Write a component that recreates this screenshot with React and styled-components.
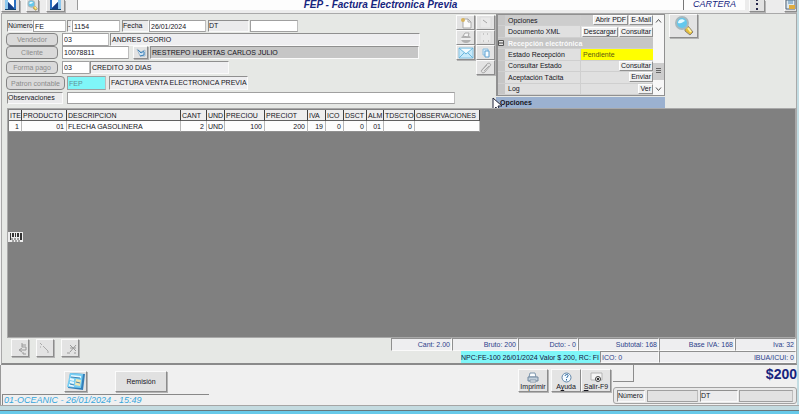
import React from 'react'
import styled, { createGlobalStyle, css } from 'styled-components'

const GlobalStyle = createGlobalStyle`
    * {
        box-sizing: border-box;
    }
    body {
        margin: 0;
        background: #f0f0f0;
        color: #14141c;
        font-family: "Liberation Sans", Arial, sans-serif;
        font-size: 7px;
        line-height: 9px;
        overflow: hidden;
    }
    button, input {
        font: inherit;
        color: inherit;
        margin: 0;
        padding: 0;
        border-radius: 0;
    }
    svg {
        flex: none;
    }
`
const raised = css`
    border: 1px solid;
    border-color: #fbfbfb #8c8c8c #8c8c8c #fbfbfb;
    box-shadow: 1px 1px 0 #b4b4b4;
`
const sunken = css`
    border: 1px solid;
    border-color: #8f8f8f #fafafa #fafafa #8f8f8f;
`
const Window = styled.div`
    border-right: 2px solid #c3dde3;
    background: #f0f0f0;
`
const TopBar = styled.header`
    display: flex;
    align-items: flex-start;
    height: 13px;
    overflow: hidden;
    padding-left: 1px;
    background: #ececec;
`
const TopButton = styled.button`
    ${raised}
    display: flex;
    align-items: flex-end;
    justify-content: center;
    flex: none;
    width: ${props => props.$w}px;
    height: 12px;
    margin-right: ${props => props.$gap || 0}px;
    border-top: none;
    background: #e2e2e2;
`
const Title = styled.h1`
    flex: 1;
    height: 10px;
    margin: 0;
    background: #fdfdfd;
    border-left: 1px solid #999;
    color: #16247e;
    font-size: 10px;
    line-height: 10px;
    font-weight: 700;
    font-style: italic;
    text-align: center;
`
const Module = styled.div`
    flex: none;
    width: 62px;
    height: 10px;
    margin-right: 4px;
    border-left: 1px solid #777;
    background: #fdfdfd;
    color: #16247e;
    font-size: 9px;
    line-height: 9px;
    font-style: italic;
    text-align: center;
`
const Panel = styled.main`
    border: 1px solid #a9a9a9;
    border-bottom: 2px solid #8a8a8a;
    background: #e6e8e5;
    padding-left: 4px;
    margin-left: 1px;
`
const Upper = styled.div`
    display: flex;
    align-items: flex-start;
    height: 94px;
`
const Form = styled.form`
    flex: none;
    width: 449px;
    padding-top: 6px;
`
const Row = styled.div`
    display: flex;
    align-items: stretch;
    height: ${props => props.$h || 13}px;
    margin-bottom: ${props => props.$gap || 0}px;
    padding-left: ${props => props.$indent || 0}px;
`
const Field = styled.input`
    width: ${props => props.$w ? `${props.$w}px` : 'auto'};
    flex: ${props => props.$w ? 'none' : '1'};
    min-width: 0;
    margin-right: ${props => props.$gap || 0}px;
    padding-left: 1px;
    border: 1px solid #a0a0a0;
    border-color: #a0a0a0 #bdbdbd #a0a0a0 #a0a0a0;
    background: ${props => props.$bg || '#fff'};
    color: ${props => props.$color || 'inherit'};
    outline: none;
`
const Caption = styled.label`
    ${sunken}
    flex: none;
    width: ${props => props.$w}px;
    margin-right: ${props => props.$gap || 0}px;
    background: #ebebec;
    line-height: 10px;
    white-space: nowrap;
`
const Display = styled.output`
    ${sunken}
    flex: none;
    width: ${props => props.$w}px;
    padding-left: 1px;
    background: ${props => props.$bg || '#eeeef0'};
    line-height: 11px;
    white-space: nowrap;
`
const Pill = styled.button`
    flex: none;
    width: ${props => props.$w}px;
    margin-right: ${props => props.$gap}px;
    border: 1px solid #858585;
    border-radius: 4px;
    background: #dadada;
    color: #8a8a8a;
    line-height: 9px;
    white-space: nowrap;
`
const IconButton = styled.button`
    ${raised}
    display: flex;
    align-items: center;
    justify-content: center;
    flex: none;
    width: ${props => props.$w}px;
    height: ${props => props.$h}px;
    margin-right: ${props => props.$gap || 0}px;
    background: #e3e3e3;
`
const Tools = styled.div`
    display: grid;
    grid-template-columns: 19px 19px;
    grid-auto-rows: 15px;
    gap: 0 1px;
    width: 41px;
    flex: none;
    padding: 1px 0 0 1px;
`
const Side = styled.section`
    position: relative;
    flex: none;
    width: 169px;
    margin-right: 4px;
`
const Properties = styled.div`
    display: grid;
    grid-template-columns: 1fr 11px;
    height: 82px;
    border: 1px solid #909090;
    border-left-width: 2px;
    background: #c9c9c9;
`
const PropertyList = styled.div`
    display: grid;
    grid-template-rows: repeat(7, 1fr);
    min-width: 0;
`
const Property = styled.div`
    display: grid;
    grid-template-columns: 7px 75px 1fr;
    align-items: center;
    min-height: 0;
    border-bottom: 1px solid #cfcfcf;
    background: ${props => props.$bg || '#e0e0e0'};
    color: ${props => props.$group ? '#fafafa' : '#14141c'};
    font-weight: ${props => props.$group ? '700' : '400'};
    white-space: nowrap;
`
const Gutter = styled.div`
    display: flex;
    align-items: center;
    align-self: stretch;
    background: #c6c6c6;
`
const PropertyName = styled.div`
    padding-left: 3px;
`
const Value = styled.div`
    display: flex;
    justify-content: ${props => props.$mark ? 'flex-start' : 'flex-end'};
    align-items: center;
    align-self: stretch;
    gap: 1px;
    padding-left: ${props => props.$mark ? '2px' : '0'};
    border-left: 1px solid #cfcfcf;
    background: ${props => props.$mark ? '#ffff00' : 'transparent'};
    color: ${props => props.$mark ? '#5c5a10' : 'inherit'};
`
const MiniButton = styled.button`
    height: 10px;
    padding: 0 1px;
    border: 1px solid;
    border-color: #fff #909090 #909090 #fff;
    background: #f0f0f0;
    line-height: 8px;
`
const ScrollBar = styled.div`
    display: flex;
    flex-direction: column;
    align-items: center;
    justify-content: space-between;
    padding: 4px 0;
    background: #f7f7f7;
`
const Thumb = styled.div`
    display: flex;
    align-items: center;
    justify-content: center;
    width: 100%;
    height: 17px;
    margin-top: 32px;
    background: #cdcdcd;
`
const SideTitle = styled.h2`
    height: 11px;
    margin: 1px 0 0;
    padding-left: 4px;
    background: #9bb1d0;
    font-size: 7px;
    line-height: 12px;
    font-weight: 700;
`
const Pointer = styled.svg`
    position: absolute;
    left: -4px;
    top: 83px;
`
const Sheet = styled.section`
    position: relative;
    height: 230px;
    margin-left: 1px;
    border: 1px solid #fafafa;
    outline: 1px solid #a9a9a9;
    outline-offset: -1px;
    background: #808080;
    padding: 1px 0 0 1px;
`
const Table = styled.table`
    width: 471px;
    table-layout: fixed;
    border-collapse: separate;
    border-spacing: 0;
`
const Head = styled.th`
    height: 11px;
    padding: 0 1px;
    border-right: 1px solid #404040;
    border-bottom: 1px solid #606060;
    background: #eeeeee;
    font-weight: 400;
    line-height: 9px;
    text-align: left;
    white-space: nowrap;
`
const Cell = styled.td`
    height: 11px;
    padding: 0 ${props => props.$left ? '1px' : '2px'};
    border-right: 1px solid #b8b8b8;
    border-bottom: 1px solid #909090;
    background: #fdfdfd;
    line-height: 9px;
    text-align: ${props => props.$left ? 'left' : 'right'};
    white-space: nowrap;
`
const Barcode = styled.svg`
    position: absolute;
    left: 0;
    top: 123px;
`
const Lower = styled.div`
    display: flex;
    justify-content: space-between;
    height: 25px;
`
const SmallTools = styled.div`
    display: flex;
    gap: 7px;
    padding: 1px 0 0 5px;
`
const Totals = styled.div`
    width: 405px;
    color: #2b3f8b;
`
const TotalRow = styled.div`
    display: flex;
    justify-content: flex-end;
    height: ${props => props.$h}px;
`
const Total = styled.div`
    ${sunken}
    flex: none;
    width: ${props => props.$w}px;
    padding: 0 1px;
    background: #eeeef0;
    line-height: 11px;
    text-align: ${props => props.$left ? 'left' : 'right'};
    white-space: nowrap;
`
const Notice = styled(Total)`
    padding: 0;
    border: none;
    background: #7ff6f8;
    color: #15153c;
    line-height: 13px;
`
const Bottom = styled.footer`
    display: flex;
    justify-content: space-between;
    height: 40px;
    border-left: 1px solid #999;
    background: #f0f0f0;
`
const BottomLeft = styled.div`
    width: 208px;
    padding-top: 6px;
`
const Actions = styled.div`
    display: flex;
    align-items: stretch;
    gap: 28px;
    height: 21px;
    padding-left: 63px;
`
const TextButton = styled.button`
    ${raised}
    width: 52px;
    background: #e1e1e1;
`
const Status = styled.div`
    height: 11px;
    margin: 2px 0 0 1px;
    padding-left: 1px;
    border-top: 1px solid #888;
    border-left: 1px solid #888;
    color: #36a6dd;
    font-size: 9px;
    line-height: 11px;
    font-style: italic;
    white-space: nowrap;
`
const BottomRight = styled.div`
    display: flex;
`
const Commands = styled.div`
    display: flex;
    padding: 4px 2px 0 0;
`
const Command = styled.button`
    ${raised}
    display: flex;
    flex-direction: column;
    align-items: center;
    justify-content: space-between;
    width: 30px;
    height: 23px;
    margin-right: ${props => props.$gap || 0}px;
    padding-top: 2px;
    background: #e4e4e4;
    line-height: 8px;
    white-space: nowrap;
`
const Summary = styled.div`
    display: flex;
    flex-direction: column;
    justify-content: space-between;
    width: 184px;
    padding-bottom: 1px;
`
const SummaryTop = styled.div`
    display: flex;
    justify-content: space-between;
`
const Blank = styled.div`
    width: 21px;
    height: 17px;
    border-right: 1px solid #8c8c8c;
    border-bottom: 1px solid #8c8c8c;
`
const Amount = styled.strong`
    color: #16247e;
    font-size: 14px;
    line-height: 18px;
`
const Reference = styled.div`
    display: flex;
    align-items: center;
    height: 17px;
    padding: 2px 3px;
    border: 1px solid #a2a2a2;
    border-radius: 3px;
    background: #e9e9e9;

    & > * {
        height: 12px;
    }
`
const TaskEdge = styled.div`
    height: 6px;
    margin-right: -2px;
    border-top: 1px solid #a5a5a5;
    border-bottom: 1px solid #66777c;
    background: #c4dbe0;
`
const TaskBar = styled.nav`
    height: 4px;
    margin-right: -2px;
    overflow: hidden;
    background: #67c9e9;
`

const Arrow = ({ flip }) => (
    <svg width="11" height="11" viewBox="0 0 11 11" transform={flip ? 'scale(-1 1)' : undefined}>
        <path d="M0 0h11v9H0z" fill="#2a6fc0" />
        <path d="M0 0h3v9H0z" fill="#8cc7ee" />
        <path d="M9 0v8L3 2V0z" fill="#fff" />
        <path d="M3 2l6 6v1H3z" fill="#143f86" />
        <path d="M0 9h11v1H0z" fill="#174670" />
    </svg>
)
const Lens = ({ size }) => (
    <svg width={size} height={size} viewBox="0 0 20 20">
        <path d="M11 12l3-2 5 6-3 3-5-4z" fill="#e4bd3a" stroke="#8c8376" />
        <path d="M14 12l3 4" stroke="#fff3a3" strokeWidth="2" />
        <circle cx="8" cy="7" r="6" fill="#63c8ed" stroke="#a6b8be" strokeWidth="2" />
        <path d="M4 7c0-4 5-5 7-2-3 1-3 3-7 2z" fill="#e5faff" />
    </svg>
)
const GreyArt = ({ d }) => (
    <svg width="13" height="13" viewBox="0 0 13 13" fill="none" stroke="#a5a5a5">
        <path d="M1 1h11v11H1z" stroke="#dcdcdc" fill="#e9e9e9" />
        <path d={d} />
    </svg>
)

const columns = [
    ['ITE', 13, '1'],
    ['PRODUCTO', 45, '01'],
    ['DESCRIPCION', 114, 'FLECHA GASOLINERA', true],
    ['CANT', 26, '2'],
    ['UND', 18, 'UND', true],
    ['PRECIOU', 40, '100'],
    ['PRECIOT', 43, '200'],
    ['IVA', 18, '19'],
    ['ICO', 18, '0'],
    ['DSCT', 23, '0'],
    ['ALM', 17, '01'],
    ['TDSCTO', 31, '0'],
    ['OBSERVACIONES', 65, ''],
]

const properties = [
    { name: 'Opciones', bg: '#cdcdcd', actions: ['Abrir PDF', 'E-Mail'] },
    { name: 'Documento XML', actions: ['Descargar', 'Consultar'] },
    { name: 'Recepción electrónica', bg: '#c6c6c6', group: true },
    { name: 'Estado Recepción', mark: 'Pendiente' },
    { name: 'Consultar Estado', actions: ['Consultar'] },
    { name: 'Aceptación Tácita', actions: ['Enviar'] },
    { name: 'Log', actions: ['Ver'] },
]

const InvoiceForm = () => (
    <Form>
        <Row $h={12} $gap={1} $indent={1}>
            <Caption htmlFor="numero" $w={26}>Número</Caption>
            <Field id="numero" $w={33} $gap={1} defaultValue="FE" />
            <Caption htmlFor="consecutivo" $w={5}>-</Caption>
            <Field id="consecutivo" $w={48} $gap={2} defaultValue="1154" />
            <Caption htmlFor="fecha" $w={27}>Fecha</Caption>
            <Field id="fecha" $w={57} $gap={2} defaultValue="26/01/2024" />
            <Caption htmlFor="dt" $w={41} $gap={1}>DT</Caption>
            <Field id="dt" $w={48} />
        </Row>
        <Row>
            <Pill type="button" $w={52} $gap={4}>Vendedor</Pill>
            <Field aria-label="Vendedor" $w={47} $gap={1} defaultValue="03" />
            <Display $w={310}>ANDRES OSORIO</Display>
        </Row>
        <Row $gap={2}>
            <Pill type="button" $w={52} $gap={4}>Cliente</Pill>
            <Field aria-label="Cliente" $w={67} $gap={4} defaultValue="10078811" />
            <IconButton type="button" aria-label="Buscar cliente" $w={15} $h={13} $gap={2}>
                <svg width="10" height="10" viewBox="0 0 10 10">
                    <path d="M1 1l4 3 4-2v6H4z" fill="#d5e6f3" stroke="#a3bacb" />
                    <path d="M2 2l3 3 3-2M4 8l4-1V4" fill="none" stroke="#3a80b9" />
                </svg>
            </IconButton>
            <Display $w={269} $bg="#c6c6c6">RESTREPO HUERTAS CARLOS JULIO</Display>
        </Row>
        <Row $gap={2}>
            <Pill type="button" $w={52} $gap={4}>Forma pago</Pill>
            <Field aria-label="Forma pago" $w={28} defaultValue="03" />
            <Display $w={139}>CREDITO 30 DIAS</Display>
        </Row>
        <Row $h={14} $gap={2}>
            <Pill type="button" $w={59} $gap={2}>Patron contable</Pill>
            <Field aria-label="Patron contable" $w={39} $gap={3} $bg="#7ff6f8" $color="#628f95" defaultValue="FEP" />
            <Display $w={139}>FACTURA VENTA ELECTRONICA PREVIA</Display>
        </Row>
        <Row $h={12} $indent={1}>
            <Caption htmlFor="observaciones" $w={56} $gap={4}>Observaciones</Caption>
            <Field id="observaciones" />
        </Row>
    </Form>
)

const DocumentTools = () => (
    <Tools>
        <IconButton aria-label="Nuevo" $w={19} $h={15}>
            <svg width="12" height="12" viewBox="0 0 12 12">
                <path d="M3 2h5l3 3v6H3z" fill="#fbfbfb" stroke="#a9a9a9" />
                <path d="M8 2v3h3" fill="none" stroke="#a9a9a9" />
                <circle cx="3" cy="3" r="2" fill="#d8b45d" />
            </svg>
        </IconButton>
        <IconButton aria-label="Cortar" $w={19} $h={15}><GreyArt d="M4 4l4 3" /></IconButton>
        <IconButton aria-label="Imprimir copia" $w={19} $h={15}>
            <svg width="12" height="12" viewBox="0 0 12 12">
                <ellipse cx="6" cy="7" rx="5" ry="4" fill="#b1b1b1" />
                <path d="M3 4l2-3h4l-1 4z" fill="#f6f6f6" stroke="#aaa" />
                <path d="M1 6h10v2H1z" fill="#ededed" />
            </svg>
        </IconButton>
        <IconButton aria-label="Editar" $w={19} $h={15}><GreyArt d="M4 3h1M8 3h1M4 10h1M9 10h1" /></IconButton>
        <IconButton aria-label="Correo" $w={19} $h={15}>
            <svg width="16" height="12" viewBox="0 0 16 12">
                <path d="M1 1h14v10H1z" fill="#c8eafa" stroke="#85c2e2" />
                <path d="M1 1l7 6 7-6M1 11l5-5M15 11l-5-5" fill="none" stroke="#6bb7dd" />
                <path d="M3 2h10L8 6z" fill="#f4fcff" />
            </svg>
        </IconButton>
        <IconButton aria-label="Copiar" $w={19} $h={15}>
            <svg width="10" height="10" viewBox="0 0 10 10">
                <path d="M2 1h5v6H2z" fill="#d4eaf9" stroke="#8cbedf" />
                <path d="M4 3h4v6H4z" fill="#f7fcff" stroke="#5ca1d2" />
            </svg>
        </IconButton>
        <span />
        <IconButton aria-label="Adjuntar" $w={19} $h={15}>
            <svg width="13" height="12" viewBox="0 0 13 12" fill="none" stroke="#aaa">
                <path d="M2 9l6-7c2-2 5 0 3 2l-5 6c-2 2-5 0-3-2l5-5M5 9l5-5" />
            </svg>
        </IconButton>
    </Tools>
)

const OptionsPanel = () => (
    <Side>
        <Properties>
            <PropertyList>
                {properties.map(item => (
                    <Property key={item.name} $bg={item.bg} $group={item.group}>
                        <Gutter>
                            {item.group && (
                                <svg width="6" height="6" viewBox="0 0 6 6">
                                    <path d="M.5.5h5v5h-5z" fill="#e4e4e4" stroke="#555" />
                                    <path d="M1 3h4" stroke="#444" />
                                </svg>
                            )}
                        </Gutter>
                        <PropertyName>{item.name}</PropertyName>
                        {!item.group && (
                            <Value $mark={item.mark}>
                                {item.mark}
                                {item.actions && item.actions.map(action => (
                                    <MiniButton key={action}>{action}</MiniButton>
                                ))}
                            </Value>
                        )}
                    </Property>
                ))}
            </PropertyList>
            <ScrollBar>
                <svg width="7" height="4" viewBox="0 0 7 4"><path d="M1 3.5l2.5-3 2.5 3" fill="none" stroke="#555" /></svg>
                <Thumb>
                    <svg width="5" height="6" viewBox="0 0 5 6"><path d="M0 .5h5M0 2.5h5M0 4.5h5" stroke="#666" /></svg>
                </Thumb>
                <svg width="7" height="4" viewBox="0 0 7 4"><path d="M1 .5l2.5 3 2.5-3" fill="none" stroke="#555" /></svg>
            </ScrollBar>
        </Properties>
        <SideTitle>Opciones</SideTitle>
        <Pointer width="11" height="16" viewBox="0 0 11 16">
            <path d="M1 1v12l3-3 2 5 2-1-2-5h4z" fill="#fff" stroke="#20243a" />
        </Pointer>
    </Side>
)

const App = () => {
    return (
        <Window>
            <GlobalStyle />
            <TopBar>
                <TopButton aria-label="Anterior" $w={19} $gap={6}><Arrow /></TopButton>
                <TopButton aria-label="Buscar" $w={13} $gap={7}><Lens size={11} /></TopButton>
                <TopButton aria-label="Siguiente" $w={19} $gap={12}><Arrow flip /></TopButton>
                <Title>FEP - Factura Electronica Previa</Title>
                <Module>CARTERA</Module>
                <TopButton aria-label="Más" $w={16} $gap={19}>
                    <svg width="4" height="12" viewBox="0 0 4 12"><path d="M1 0h2v2H1zM1 4h2v2H1zM1 9h2v2H1z" fill="#26264a" /></svg>
                </TopButton>
                <TopButton aria-label="Documento" $w={13}>
                    <svg width="11" height="11" viewBox="0 0 11 11">
                        <path d="M1 0h9v9H1z" fill="#dce8f1" stroke="#54677b" />
                        <path d="M3 1h5M3 3h5" stroke="#5689b1" />
                        <path d="M4 5h6v4H4z" fill="#dfad40" />
                    </svg>
                </TopButton>
            </TopBar>
            <Panel>
                <Upper>
                    <InvoiceForm />
                    <DocumentTools />
                    <OptionsPanel />
                    <IconButton aria-label="Consultar" $w={29} $h={24}><Lens size={20} /></IconButton>
                </Upper>
                <Sheet>
                    <Table>
                        <colgroup>
                            {columns.map(([name, width]) => <col key={name} width={width} />)}
                        </colgroup>
                        <thead>
                            <tr>{columns.map(([name]) => <Head key={name}>{name}</Head>)}</tr>
                        </thead>
                        <tbody>
                            <tr>{columns.map(([name, , value, left]) => <Cell key={name} $left={left}>{value}</Cell>)}</tr>
                        </tbody>
                    </Table>
                    <Barcode width="15" height="10" viewBox="0 0 15 10">
                        <path d="M0 0h15v10H0z" fill="#ececec" />
                        <path d="M2 1h1v7H2zM4 1h2v4H4zM7 1h1v4H7zM9 1h2v4H9zM12 1h2v7h-2z" fill="#333" />
                        <path d="M3 7h9M4 9h8" stroke="#555" strokeDasharray="2 1" />
                    </Barcode>
                </Sheet>
                <Lower>
                    <SmallTools>
                        <IconButton aria-label="Insertar" $w={18} $h={18}>
                            <svg width="14" height="14" viewBox="0 0 14 14" fill="none" stroke="#999"><path d="M13 4H9v2h4v3H7M9 7L6 9l3 2M10 11v2h3M8 3h2" /></svg>
                        </IconButton>
                        <IconButton aria-label="Modificar" $w={18} $h={18}>
                            <svg width="14" height="14" viewBox="0 0 14 14" fill="none" stroke="#aaa"><path d="M2 2l2 2M5 5l5 5M9 11h2M2 6h1" /></svg>
                        </IconButton>
                        <IconButton aria-label="Eliminar" $w={18} $h={18}>
                            <svg width="14" height="14" viewBox="0 0 14 14" fill="none" stroke="#999"><path d="M7 4l6 6M13 4l-6 7M7 7h6M4 12h3M11 12h2" /></svg>
                        </IconButton>
                    </SmallTools>
                    <Totals>
                        <TotalRow $h={13}>
                            <Total $w={61}>Cant: 2.00</Total>
                            <Total $w={66}>Bruto: 200</Total>
                            <Total $w={60}>Dcto: - 0</Total>
                            <Total $w={81}>Subtotal: 168</Total>
                            <Total $w={76}>Base IVA: 168</Total>
                            <Total $w={61}>Iva: 32</Total>
                        </TotalRow>
                        <TotalRow $h={12}>
                            <Notice $w={139} $left>NPC:FE-100 26/01/2024 Valor $ 200, RC: FI</Notice>
                            <Total $w={59} $left>ICO: 0</Total>
                            <Total $w={137}>IBUA/ICUI: 0</Total>
                        </TotalRow>
                    </Totals>
                </Lower>
            </Panel>
            <Bottom>
                <BottomLeft>
                    <Actions>
                        <IconButton aria-label="Notas" $w={23} $h={21}>
                            <svg width="20" height="19" viewBox="0 0 20 19">
                                <path d="M4 1l15 1-2 16-15-2z" fill="#337fb9" />
                                <path d="M4 1l13 1-2 14-14-1z" fill="#77cdf2" />
                                <path d="M5 4l10 1M4 7l4 1M4 10l4 1M3 13l5 1" stroke="#e9f9ff" strokeWidth="2" />
                                <path d="M10 7l5 1-1 6-5-1z" fill="#f0e8b3" />
                                <path d="M5 5l9 1M10 10l4 1M4 12l4 1" stroke="#4386b5" />
                            </svg>
                        </IconButton>
                        <TextButton>Remisión</TextButton>
                    </Actions>
                    <Status>01-OCEANIC - 26/01/2024 - 15:49</Status>
                </BottomLeft>
                <BottomRight>
                    <Commands>
                        <Command $gap={3}>
                            <svg width="12" height="11" viewBox="0 0 12 11">
                                <path d="M3 1h5l1 4H2z" fill="#fafdff" stroke="#7d96ad" />
                                <path d="M1 5h10v4H1z" fill="#c2d0dc" stroke="#7289a0" />
                                <path d="M3 8h6v2H3z" fill="#fff" stroke="#8497a8" />
                            </svg>
                            Imprimir
                        </Command>
                        <Command>
                            <svg width="11" height="11" viewBox="0 0 11 11" fill="none">
                                <circle cx="5.5" cy="5.5" r="4.5" fill="#f4faff" stroke="#6286a8" />
                                <path d="M4 4c0-2 4-2 3 0L5.5 6M5.5 7v1.5" stroke="#28679f" />
                            </svg>
                            <span>A<u>y</u>uda</span>
                        </Command>
                        <Command>
                            <svg width="13" height="11" viewBox="0 0 13 11">
                                <path d="M1 1h11v7H1z" fill="#f5f5f5" stroke="#b5b5b5" />
                                <circle cx="8" cy="7" r="2.5" fill="#eee" stroke="#444" />
                                <path d="M7 6l2 2M9 6L7 8" stroke="#333" />
                            </svg>
                            <span><u>S</u>alir-F9</span>
                        </Command>
                    </Commands>
                    <Summary>
                        <SummaryTop>
                            <Blank />
                            <Amount>$200</Amount>
                        </SummaryTop>
                        <Reference>
                            <Caption htmlFor="ref-numero" $w={28} $gap={2}>Número</Caption>
                            <Field id="ref-numero" $w={51} $gap={2} $bg="#e2e2e2" />
                            <Caption htmlFor="ref-dt" $w={38} $gap={1}>DT</Caption>
                            <Field id="ref-dt" $bg="#e2e2e2" />
                        </Reference>
                    </Summary>
                </BottomRight>
            </Bottom>
            <TaskEdge />
            <TaskBar>
                <svg width="280" height="4" viewBox="0 0 280 4">
                    <path d="M96 0h36v4H96zM242 0h34v4h-34z" fill="#9fbfd5" stroke="#4c6b9c" />
                    <path d="M68 2h9v2h-9zM253 2h10v2h-10z" fill="#fff" />
                    <path d="M106 2h7v2h-7zM145 3q5-3 10 0v1h-10z" fill="#d5ae58" />
                    <path d="M176 1h20v3h-20z" fill="#3c4a5b" />
                </svg>
            </TaskBar>
        </Window>
    )
}

export default App
